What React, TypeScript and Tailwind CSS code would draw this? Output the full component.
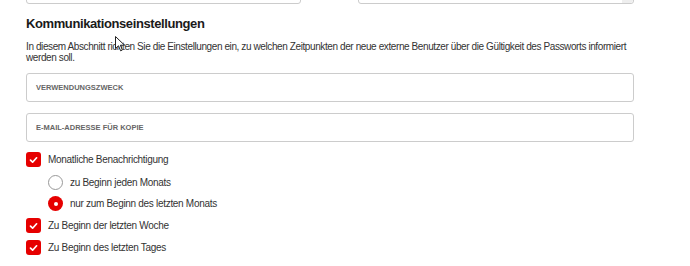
import React from "react";

const font = { fontFamily: '"Liberation Sans", Arial, sans-serif' };

function Check() {
  return (
    <div className="w-[15px] h-[15px] rounded-[3px] bg-[#e60000] flex items-center justify-center shrink-0">
      <svg width="9" height="8" viewBox="0 0 9 8" fill="none">
        <path d="M1.5 4.2 L3.6 6.2 L7.6 1.8" stroke="white" strokeWidth="1.7" strokeLinecap="round" strokeLinejoin="round" />
      </svg>
    </div>
  );
}

function Radio({ on }: { on?: boolean }) {
  return on ? (
    <div className="w-[15px] h-[15px] rounded-full bg-[#e60000] flex items-center justify-center shrink-0">
      <div className="w-[4px] h-[4px] rounded-full bg-white" />
    </div>
  ) : (
    <div className="w-[15px] h-[15px] rounded-full border border-[#999] bg-white shrink-0" />
  );
}

export default function App() {
  return (
    <div className="w-[690px] h-[266px] bg-white relative overflow-hidden text-[#333]" style={font}>
      <div className="pl-[26px] w-[634px]">
        <div className="flex gap-[57px] -mt-[26px]">
          <div className="w-[275px] h-[30px] border border-[#ccc] rounded-[3px] bg-white" />
          <div className="w-[276px] h-[30px] border border-[#ccc] rounded-[3px] bg-white flex justify-end">
            <div className="w-[11px] h-full bg-[#eee] rounded-br-[3px]" />
          </div>
        </div>
        <h2 className="mt-[10px] text-[13px] font-bold leading-[20px] tracking-[-0.4px] text-[#1a1a1a]">Kommunikationseinstellungen</h2>
        <p className="mt-[7px] text-[10px] leading-[11px] tracking-[-0.4px] text-[#333]">
          In diesem Abschnitt richten Sie die Einstellungen ein, zu welchen Zeitpunkten der neue externe Benutzer über die Gültigkeit des Passworts informiert werden soll.
        </p>
        <div className="mt-[10px] h-[29px] border border-[#ccc] rounded-[3px] flex items-center px-[9px] text-[7.5px] font-bold text-[#666]">
          VERWENDUNGSZWECK
        </div>
        <div className="mt-[11px] h-[29px] border border-[#ccc] rounded-[3px] flex items-center px-[9px] text-[7.5px] font-bold text-[#666]">
          E-MAIL-ADRESSE FÜR KOPIE
        </div>
        <div className="mt-[10px] flex items-center gap-[7px] h-[15px] text-[10px] tracking-[-0.3px]">
          <Check />
          <span>Monatliche Benachrichtigung</span>
        </div>
        <div className="mt-[8px] ml-[22px] flex items-center gap-[7px] h-[15px] text-[10px] tracking-[-0.3px]">
          <Radio />
          <span>zu Beginn jeden Monats</span>
        </div>
        <div className="mt-[6px] ml-[22px] flex items-center gap-[7px] h-[15px] text-[10px] tracking-[-0.3px]">
          <Radio on />
          <span>nur zum Beginn des letzten Monats</span>
        </div>
        <div className="mt-[7px] flex items-center gap-[7px] h-[15px] text-[10px] tracking-[-0.3px]">
          <Check />
          <span>Zu Beginn der letzten Woche</span>
        </div>
        <div className="mt-[7px] flex items-center gap-[7px] h-[15px] text-[10px] tracking-[-0.3px]">
          <Check />
          <span>Zu Beginn des letzten Tages</span>
        </div>
      </div>
      <svg className="absolute left-[115px] top-[36px]" width="11" height="16" viewBox="0 0 11 16">
        <path d="M0.5 0.5 L0.5 12.5 L3.5 9.8 L5.6 14.8 L7.4 14 L5.4 9.2 L9.5 9.2 Z" fill="white" stroke="#222" strokeWidth="1" strokeLinejoin="round" />
      </svg>
    </div>
  );
}
